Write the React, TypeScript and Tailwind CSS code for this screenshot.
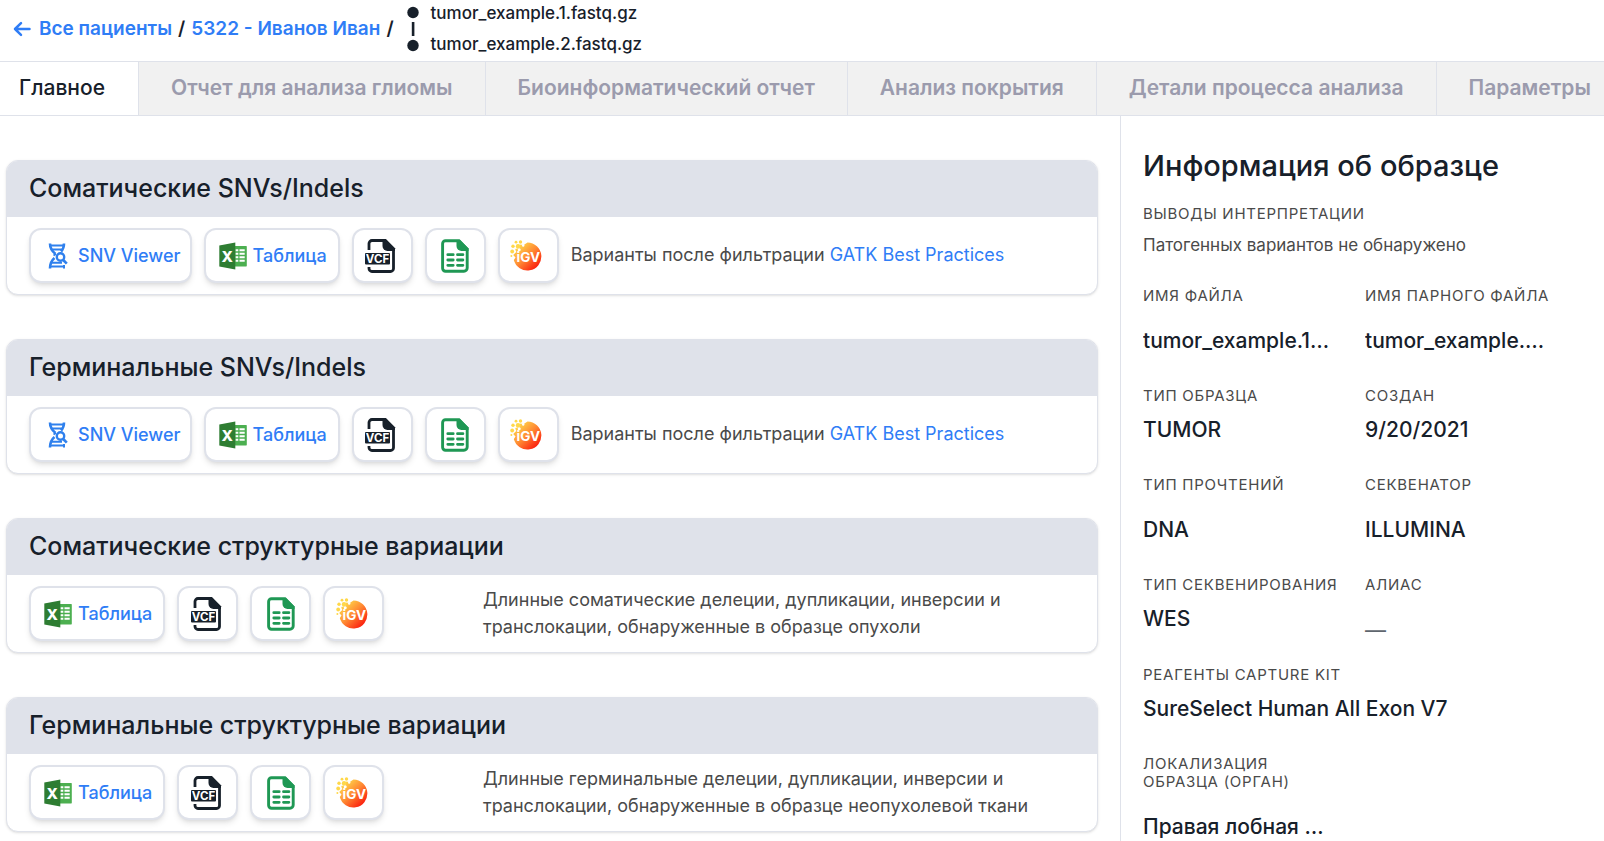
import type { ReactNode } from "react";

const tabs = [
  "Главное",
  "Отчет для анализа глиомы",
  "Биоинформатический отчет",
  "Анализ покрытия",
  "Детали процесса анализа",
  "Параметры",
];

function BackArrow() {
  return (
    <svg className="size-[18px]" viewBox="0 0 18 18" fill="none" stroke="currentColor" strokeWidth="2.5" strokeLinecap="round" strokeLinejoin="round" aria-hidden="true">
      <path d="M16.5 9H2M8 3.2 2 9l6 5.8" />
    </svg>
  );
}

function DnaIcon() {
  return (
    <svg className="h-[26px] w-5" viewBox="0 0 20 26" fill="none" stroke="#2f80ed" strokeWidth="2" aria-hidden="true">
      <path d="M2 .5c0 5 1.800 7.500 5.500 10.500M16 .5c0 3.500-1 6-3 8M2 25.500c0-5 1.500-8 4.500-10.500" strokeWidth="2.600" />
      <path d="M2 2.600h14M3.200 6.400h11.500M3.500 19.800h10.500M2 23.600h14" />
      <path d="M16 22v3.500M5.500 12.500l2.500-1.500" />
      <circle cx="12.500" cy="14" r="3.700" strokeWidth="2.400" />
      <path d="m15.200 17 3.600 3.600" strokeWidth="2.700" />
    </svg>
  );
}

function ExcelIcon() {
  return (
    <svg className="h-7 w-7" viewBox="0 0 28 28" aria-hidden="true">
      <path d="M15 4h12.200a.6.6 0 0 1 .6.6v19.200a.6.6 0 0 1-.6.6H15z" fill="#4caf50" />
      <path d="M16.500 7.200h2.800v2h-2.800zM16.500 10.700h2.800v2h-2.800zM16.500 14.200h2.800v2h-2.800zM16.500 17.700h2.800v2h-2.800zM20.500 7.200h5.200v2h-5.200zM20.500 10.700h5.200v2h-5.200zM20.500 14.200h5.200v2h-5.200zM20.500 17.700h5.200v2h-5.200z" fill="#fff" />
      <path d="M16.300 27.500.3 24.500v-21l16-3z" fill="#2e7d32" />
      <text x="8.200" y="19.500" textAnchor="middle" fontFamily="Inter, sans-serif" fontWeight="800" fontSize="15" fill="#fff">X</text>
    </svg>
  );
}

function VcfIcon() {
  return (
    <svg className="h-[34px] w-8" viewBox="0 0 32 34" aria-hidden="true">
      <path d="M5 11V4.500a3 3 0 0 1 3-3h13L29.500 10v19.500a3 3 0 0 1-3 3H8a3 3 0 0 1-3-3V28" fill="none" stroke="#17202a" strokeWidth="2.800" />
      <path d="M18.500 0h3.300L31 9.300V12h-7.500a5 5 0 0 1-5-5z" fill="#17202a" />
      <rect x="1" y="14" width="25" height="11.500" rx="1" fill="#17202a" />
      <text x="13.500" y="23.800" textAnchor="middle" fontFamily="Inter, sans-serif" fontWeight="700" fontSize="11.500" fill="#fff">VCF</text>
    </svg>
  );
}

function SheetIcon() {
  return (
    <svg className="h-[34px] w-7" viewBox="0 0 28 34" aria-hidden="true">
      <path d="M4.500 1.800H18L26.200 10v19a3.200 3.200 0 0 1-3.200 3.200H4.500A2.900 2.900 0 0 1 1.600 29.300V4.700a2.900 2.900 0 0 1 2.900-2.900z" fill="none" stroke="#1f9854" strokeWidth="2.900" />
      <path d="M15.500 1H19l8.500 8.500V12H20.500a5 5 0 0 1-5-5z" fill="#1f9854" />
      <path d="M6.800 15.700h5.400M16.500 15.700h5.400M6.800 21h5.400M16.500 21h5.400M6.800 26.300h5.400M16.500 26.300h5.400" stroke="#1f9854" strokeWidth="2.800" strokeLinecap="round" />
    </svg>
  );
}

function IgvIcon() {
  return (
    <svg className="h-8 w-8" viewBox="0 0 32 32" aria-hidden="true">
      <defs>
        <linearGradient id="igv" x1="0.100" y1="0.100" x2="0.850" y2="0.900">
          <stop offset="0" stopColor="#ffe14d" />
          <stop offset="0.500" stopColor="#ff8a33" />
          <stop offset="1" stopColor="#fb1d0e" />
        </linearGradient>
      </defs>
      <path d="M17.500 2.500a14 14 0 1 1-13.700 17.500l1.700-2.500-2.300-2.500 3-3-1-3 4-1 .5-3.500 4 .5z" fill="url(#igv)" />
      <g fill="#ffd84a">
        <circle cx="6" cy="2.200" r="1.400" />
        <circle cx="10.500" cy="2" r="1.700" />
        <circle cx="3" cy="6.300" r="1.700" />
        <circle cx="8" cy="6.200" r="2.200" />
        <circle cx="2.200" cy="11.500" r="1.900" />
        <circle cx="1.400" cy="16" r="1" />
      </g>
      <circle cx="9.200" cy="9.800" r="1.500" fill="#fff" />
      <circle cx="13.200" cy="5.500" r="1.200" fill="#fff" />
      <text x="18.300" y="22" textAnchor="middle" fontFamily="Inter, sans-serif" fontWeight="700" fontSize="13.500" fill="#fff">iGV</text>
    </svg>
  );
}

const buttonClass =
  "flex h-[55px] shrink-0 items-center justify-center rounded-xl border-2 border-[#dfe2ea] bg-white text-lg font-medium text-[#2f7df6] shadow-md";

function IconButton({ title, children }: { title: string; children: ReactNode }) {
  return (
    <button type="button" aria-label={title} className={`${buttonClass} w-[61px]`}>
      {children}
    </button>
  );
}

function Card({ title, viewer, children }: { title: string; viewer?: boolean; children: ReactNode }) {
  return (
    <section className="overflow-hidden rounded-xl border border-[#dfe2ea] bg-white shadow-sm">
      <h2 className="bg-[#dfe2ea] px-[22px] pt-[9px] pb-[11px] text-[25px] leading-9 font-medium text-[#17202a]">{title}</h2>
      <div className={`flex items-center px-[22px] py-[11px] ${viewer ? "gap-3" : "justify-between"}`}>
        <div className="flex shrink-0 gap-3">
          {viewer && (
            <button type="button" className={`${buttonClass} gap-2.5 pr-[9px] pl-[17px]`}>
              <DnaIcon />
              SNV Viewer
            </button>
          )}
          <button type="button" className={`${buttonClass} gap-1.5 pr-[11px] pl-[13px]`}>
            <ExcelIcon />
            Таблица
          </button>
          <IconButton title="VCF"><span className="-ml-1"><VcfIcon /></span></IconButton>
          <IconButton title="Google Sheets"><SheetIcon /></IconButton>
          <IconButton title="IGV"><span className="-ml-1"><IgvIcon /></span></IconButton>
        </div>
        <p className={`-mt-0.5 text-lg leading-[27px] text-[#4a4a4a] ${viewer ? "" : "w-[592px]"}`}>{children}</p>
      </div>
    </section>
  );
}

const labelClass = "text-[15px] leading-[18px] tracking-wider text-[#4a4a4a] uppercase";

function Field({ label, value, editable, wide }: { label: string; value: string; editable?: boolean; wide?: boolean }) {
  return (
    <div className={wide ? "col-span-2" : "min-w-0"}>
      <dt className={`${labelClass} pr-5`}>{label}</dt>
      <dd className={`truncate pr-8 text-[21px] leading-8 font-medium text-[#17202a] ${editable ? "mt-5" : "mt-[9px]"}`}>{value}</dd>
    </div>
  );
}

export default function App() {
  return (
    <div className="flex min-h-screen flex-col overflow-hidden bg-white font-[Inter,sans-serif] text-[#17202a]">
      <header className="flex h-[61px] items-center pb-1 pl-[13px]">
        <nav className="flex items-center text-[19px] leading-7 font-semibold whitespace-nowrap">
          <a href="#patients" className="flex items-center gap-2 text-[#2f7df6]">
            <BackArrow />
            Все пациенты
          </a>
          <span className="mx-1.5">/</span>
          <a href="#patient" className="text-[#2f7df6]">5322 - Иванов Иван</a>
          <span className="ml-1.5">/</span>
        </nav>
        <svg className="ml-[13px] h-[46px] w-3 shrink-0" viewBox="0 0 12 46" fill="#17202a" aria-hidden="true">
          <circle cx="6" cy="6.500" r="5.700" />
          <path d="M4.800 16h2.600v14H4.800z" />
          <circle cx="6" cy="39.500" r="5.700" />
        </svg>
        <div className="ml-3 flex flex-col text-[17px] leading-[31px] font-medium">
          <span>tumor_example.1.fastq.gz</span>
          <span>tumor_example.2.fastq.gz</span>
        </div>
      </header>

      <div role="tablist" className="flex overflow-hidden border-y border-[#dfe2ea] bg-[#f1f1f1]">
        {tabs.map((tab, i) => (
          <button
            key={tab}
            type="button"
            role="tab"
            aria-selected={i === 0}
            className={`h-[53px] shrink-0 border-r border-[#dfe2ea] pb-0.5 text-[21px] whitespace-nowrap ${i === 0 ? "bg-white pr-[33px] pl-[19px] font-medium" : "px-8 font-semibold text-[#9b9bad]"}`}
          >
            {tab}
          </button>
        ))}
      </div>

      <div className="flex flex-1">
        <main className="flex min-w-0 flex-1 flex-col gap-11 pt-11 pr-[22px] pl-1.5">
          <Card title="Соматические SNVs/Indels" viewer>
            Варианты после фильтрации <a href="#gatk" className="text-[#2f7df6]">GATK Best Practices</a>
          </Card>
          <Card title="Герминальные SNVs/Indels" viewer>
            Варианты после фильтрации <a href="#gatk" className="text-[#2f7df6]">GATK Best Practices</a>
          </Card>
          <Card title="Соматические структурные вариации">
            Длинные соматические делеции, дупликации, инверсии и транслокации, обнаруженные в образце опухоли
          </Card>
          <Card title="Герминальные структурные вариации">
            Длинные герминальные делеции, дупликации, инверсии и транслокации, обнаруженные в образце неопухолевой ткани
          </Card>
        </main>

        <aside className="w-[484px] shrink-0 border-l border-[#dfe2ea] pt-8 pr-[17px] pl-[22px]">
          <h1 className="text-[29px] leading-9 font-medium">Информация об образце</h1>
          <h2 className={`${labelClass} mt-[21px]`}>Выводы интерпретации</h2>
          <p className="mt-2 text-[17px] leading-7 text-[#4a4a4a]">Патогенных вариантов не обнаружено</p>
          <dl className="mt-7 grid grid-cols-2 gap-y-[30px]">
            <Field label="Имя файла" value="tumor_example.1.fastq.gz" editable />
            <Field label="Имя парного файла" value="tumor_example.2.fastq.gz" editable />
            <Field label="Тип образца" value="TUMOR" />
            <Field label="Создан" value="9/20/2021" />
            <Field label="Тип прочтений" value="DNA" editable />
            <Field label="Секвенатор" value="ILLUMINA" editable />
            <Field label="Тип секвенирования" value="WES" />
            <div>
              <dt className={labelClass}>Алиас</dt>
              <dd className="mt-8 text-[21px] leading-[10px] text-[#5f666e]">—</dd>
            </div>
            <Field label="Реагенты Capture Kit" value="SureSelect Human All Exon V7" wide />
            <Field label="Локализация образца (орган)" value="Правая лобная доля" editable />
          </dl>
        </aside>
      </div>
    </div>
  );
}
